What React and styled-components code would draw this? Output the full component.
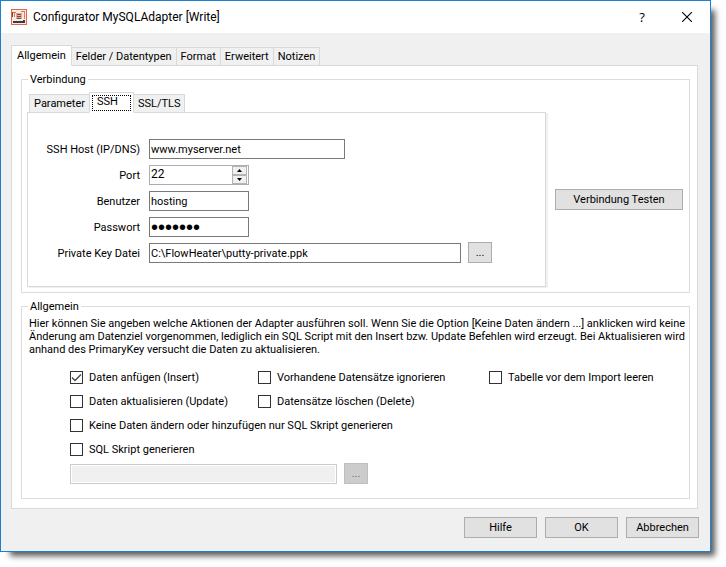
import { useState } from "react";
import styled, { createGlobalStyle } from "styled-components";

const GlobalStyle = createGlobalStyle`
  *, *::before, *::after {
    box-sizing: border-box;
  }

  body {
    margin: 0;
    background: #fff;
    color: #000;
    font-family: Roboto, "Liberation Sans", Arial, sans-serif;
    font-size: 11px;
    line-height: 13px;
  }

  button, input {
    font: inherit;
    color: inherit;
  }
`;

const Page = styled.div`
  display: flex;
  min-height: 100vh;
  padding: 0 15px 15px 0;
`;

const Window = styled.main`
  flex: 1;
  min-width: 0;
  display: flex;
  flex-direction: column;
  background: #f0f0f0;
  border: 1px solid #1a80d2;
  box-shadow: 7px 7px 6px -3px rgba(0, 0, 0, 0.65);
`;

const TitleBar = styled.header`
  display: flex;
  align-items: center;
  height: 32px;
  padding: 0 8px 0 10px;
  background: #fff;
`;

const Title = styled.h1`
  flex: 1;
  margin: 0 0 0 6px;
  font-size: 12px;
  font-weight: 400;
  line-height: 16px;
`;

const TitleButton = styled.button`
  display: flex;
  align-items: center;
  justify-content: center;
  width: 30px;
  height: 30px;
  margin-left: 15px;
  padding: 0;
  border: 0;
  background: none;
  font-family: "Open Sans", sans-serif;
  font-size: 13px;
`;

const Content = styled.div`
  flex: 1;
  padding: 12px 12px 0 10px;
`;

const TabList = styled.div`
  display: flex;
  align-items: flex-end;
  height: 20px;
  padding-left: ${(props) => (props.$inner ? "2px" : "0")};
`;

const Tab = styled.button`
  position: relative;
  height: 19px;
  margin: 0 0 -1px -1px;
  padding: 0 4px;
  border: 1px solid #d9d9d9;
  background: #f0f0f0;
  white-space: nowrap;

  &:first-child {
    margin-left: 0;
  }

  &[aria-selected="true"] {
    z-index: 1;
    height: 21px;
    padding: 0 5px 1px;
    border-bottom-color: #fff;
    background: #fff;
  }
`;

const FocusTab = styled(Tab)`
  &[aria-selected="true"] {
    padding: 0 15px 2px 7px;
  }

  &[aria-selected="true"]::after {
    content: "";
    position: absolute;
    inset: 2px 2px 1px;
    border: 1px dotted #000;
  }
`;

const TabPanel = styled.div`
  padding: 7px 7px 9px 9px;
  border: 1px solid #d9d9d9;
  background: #fff;
`;

const Group = styled.fieldset`
  min-width: 0;
  margin: 0;
  padding: 0 6px ${(props) => (props.$tall ? "14px" : "5px")} 5px;
  border: 1px solid #dcdcdc;

  & + & {
    margin-top: 7px;
  }
`;

const Legend = styled.legend`
  margin-left: 1px;
  padding: 0 2px;
`;

const Connection = styled.div`
  display: grid;
  grid-template-columns: 1fr 128px;
  column-gap: 9px;
  align-items: center;
  padding-top: 6px;
`;

const InnerPanel = styled.div`
  display: grid;
  grid-template-columns: 112px 1fr;
  grid-auto-rows: 20px;
  gap: 6px 9px;
  align-items: center;
  padding: 26px 53px 23px 0;
  border: 1px solid #d9d9d9;
  box-shadow: 2px 1px 0 #f0f0f0;
`;

const FieldLabel = styled.label`
  text-align: right;
  white-space: nowrap;
`;

const TextInput = styled.input`
  width: ${(props) => props.$width || "100%"};
  min-width: 0;
  height: 20px;
  padding: 0 1px;
  border: 1px solid #7a7a7a;
  border-radius: 0;
  background: #fff;

  &:disabled {
    border-color: #ccc;
    background: #f0f0f0;
    box-shadow: inset 0 0 0 1px #fff;
  }
`;

const PasswordInput = styled(TextInput)`
  font-family: "Liberation Sans", Arial, sans-serif;
  font-size: 20px;
`;

const Spinner = styled.div`
  display: flex;
  width: 100px;
  height: 20px;
  padding-right: 1px;
  border: 1px solid #abadb3;
`;

const SpinnerInput = styled.input`
  flex: 1;
  min-width: 0;
  padding: 0 1px 2px;
  border: 0;
  background: none;
  font-size: 12px;
`;

const SpinnerArrows = styled.div`
  display: grid;
  grid-template-rows: 1fr 1fr;
  width: 15px;
`;

const SpinnerButton = styled.button`
  display: flex;
  align-items: center;
  justify-content: center;
  min-height: 0;
  padding: 0;
  border: 1px solid #b4b4b4;
  background: #f0f0f0;
`;

const InputRow = styled.div`
  display: flex;
  align-items: flex-end;
  align-self: end;
  gap: 7px;
  padding-left: ${(props) => (props.$indent ? "43px" : "0")};
`;

const Button = styled.button`
  width: ${(props) => props.$width || "100%"};
  flex-shrink: 0;
  height: 21px;
  padding: 0;
  border: 1px solid #adadad;
  background: #e1e1e1;

  &:disabled {
    border-color: #bfbfbf;
    background: #ccc;
    color: #6d6d6d;
  }
`;

const TestButton = styled(Button)`
  margin-top: 20px;
`;

const Description = styled.p`
  margin: 4px -6px 15px 2px;
`;

const Options = styled.div`
  display: grid;
  grid-template-columns: 188px 231px 1fr;
  grid-auto-rows: 13px;
  row-gap: 11px;
  padding: 0 0 7px 43px;
`;

const Option = styled.label`
  display: flex;
  align-items: center;
  gap: 6px;
  white-space: nowrap;
  grid-column: ${(props) => (props.$wide ? "1 / -1" : "auto")};
  grid-row: ${(props) => props.$row};
`;

const CheckSlot = styled.span`
  display: grid;

  > * {
    grid-area: 1 / 1;
  }
`;

const CheckInput = styled.input`
  appearance: none;
  width: 13px;
  height: 13px;
  margin: 0;
  border: 1px solid #333;
  background: #fff;
`;

const CheckMark = styled.svg`
  pointer-events: none;
`;

const Footer = styled.footer`
  display: flex;
  justify-content: flex-end;
  gap: 8px;
  padding: 8px 11px 13px;
`;

const AppIcon = () => (
  <svg width="16" height="16" viewBox="0 0 16 16" aria-hidden="true">
    <rect x="0.5" y="0.5" width="15" height="15" fill="#fbeae3" stroke="#e4683f" />
    <path d="M2 3.5h3M10 2.5h4" stroke="#e4683f" />
    <path d="M1.5 3v5" stroke="#6b4a40" />
    <path d="M3.5 4v4M13.5 3v7" stroke="#e07a58" />
    <path d="M5 4h6v6H5z" fill="#e9a68f" />
    <path d="M6 5.5h4M6 7.5h4M6 9.5h4" stroke="#6c5049" />
    <path d="M2 12h10v-1h2v3H2z" fill="#353c42" />
  </svg>
);

const MAIN_TABS = [
  "Allgemein",
  "Felder / Datentypen",
  "Format",
  "Erweitert",
  "Notizen",
];

const INNER_TABS = ["Parameter", "SSH", "SSL/TLS"];

const OPTIONS = [
  { label: "Daten anfügen (Insert)", row: 1, checked: true },
  { label: "Vorhandene Datensätze ignorieren", row: 1 },
  { label: "Tabelle vor dem Import leeren", row: 1 },
  { label: "Daten aktualisieren (Update)", row: 2 },
  { label: "Datensätze löschen (Delete)", row: 2 },
  {
    label: "Keine Daten ändern oder hinzufügen nur SQL Skript generieren",
    row: 3,
    wide: true,
  },
  { label: "SQL Skript generieren", row: 4, wide: true },
];

const CheckOption = ({ option }) => {
  const [checked, setChecked] = useState(Boolean(option.checked));

  return (
    <Option $row={option.row} $wide={option.wide}>
      <CheckSlot>
        <CheckInput
          type="checkbox"
          checked={checked}
          onChange={(e) => setChecked(e.target.checked)}
        />
        {checked && (
          <CheckMark width="13" height="13" viewBox="0 0 13 13">
            <path
              d="M2 6.5 5 9.5 11 3.5"
              fill="none"
              stroke="#444"
              strokeWidth="1.3"
            />
          </CheckMark>
        )}
      </CheckSlot>
      {option.label}
    </Option>
  );
};

const App = () => {
  const [mainTab, setMainTab] = useState("Allgemein");
  const [innerTab, setInnerTab] = useState("SSH");
  const [port, setPort] = useState(22);

  return (
    <Page>
      <GlobalStyle />
      <Window>
        <TitleBar>
          <AppIcon />
          <Title>Configurator MySQLAdapter [Write]</Title>
          <TitleButton type="button">?</TitleButton>
          <TitleButton type="button" aria-label="Schließen">
            <svg width="10" height="10" viewBox="0 0 10 10">
              <path d="M0 0 10 10M10 0 0 10" stroke="#000" strokeWidth="1.1" />
            </svg>
          </TitleButton>
        </TitleBar>

        <Content>
          <TabList role="tablist">
            {MAIN_TABS.map((name) => (
              <Tab
                key={name}
                type="button"
                role="tab"
                aria-selected={mainTab === name}
                onClick={() => setMainTab(name)}
              >
                {name}
              </Tab>
            ))}
          </TabList>

          <TabPanel role="tabpanel">
            <Group>
              <Legend>Verbindung</Legend>
              <Connection>
                <div>
                  <TabList role="tablist" $inner>
                    {INNER_TABS.map((name) => (
                      <FocusTab
                        key={name}
                        type="button"
                        role="tab"
                        aria-selected={innerTab === name}
                        onClick={() => setInnerTab(name)}
                      >
                        {name}
                      </FocusTab>
                    ))}
                  </TabList>
                  <InnerPanel role="tabpanel">
                    <FieldLabel htmlFor="host">SSH Host (IP/DNS)</FieldLabel>
                    <TextInput
                      id="host"
                      $width="196px"
                      defaultValue="www.myserver.net"
                    />

                    <FieldLabel htmlFor="port">Port</FieldLabel>
                    <Spinner>
                      <SpinnerInput
                        id="port"
                        value={port}
                        onChange={(e) => setPort(Number(e.target.value) || 0)}
                      />
                      <SpinnerArrows>
                        <SpinnerButton
                          type="button"
                          aria-label="Port erhöhen"
                          onClick={() => setPort(port + 1)}
                        >
                          <svg width="5" height="3" viewBox="0 0 5 3">
                            <path d="M0 3 2.5 0 5 3z" />
                          </svg>
                        </SpinnerButton>
                        <SpinnerButton
                          type="button"
                          aria-label="Port verringern"
                          onClick={() => setPort(port - 1)}
                        >
                          <svg width="5" height="3" viewBox="0 0 5 3">
                            <path d="M0 0h5L2.5 3z" />
                          </svg>
                        </SpinnerButton>
                      </SpinnerArrows>
                    </Spinner>

                    <FieldLabel htmlFor="user">Benutzer</FieldLabel>
                    <TextInput id="user" $width="100px" defaultValue="hosting" />

                    <FieldLabel htmlFor="password">Passwort</FieldLabel>
                    <PasswordInput
                      id="password"
                      type="password"
                      $width="100px"
                      defaultValue="hosting"
                    />

                    <FieldLabel htmlFor="keyfile">Private Key Datei</FieldLabel>
                    <InputRow>
                      <TextInput
                        id="keyfile"
                        defaultValue="C:\FlowHeater\putty-private.ppk"
                      />
                      <Button type="button" $width="24px">
                        ...
                      </Button>
                    </InputRow>
                  </InnerPanel>
                </div>
                <TestButton type="button">Verbindung Testen</TestButton>
              </Connection>
            </Group>

            <Group $tall>
              <Legend>Allgemein</Legend>
              <Description>
                Hier können Sie angeben welche Aktionen der Adapter ausführen
                soll. Wenn Sie die Option [Keine Daten ändern ...] anklicken
                wird keine Änderung am Datenziel vorgenommen, lediglich ein SQL
                Script mit den Insert bzw. Update Befehlen wird erzeugt. Bei
                Aktualisieren wird anhand des PrimaryKey versucht die Daten zu
                aktualisieren.
              </Description>
              <Options>
                {OPTIONS.map((option) => (
                  <CheckOption key={option.label} option={option} />
                ))}
              </Options>
              <InputRow $indent>
                <TextInput $width="267px" aria-label="SQL Skript Datei" disabled />
                <Button type="button" $width="24px" disabled>
                  ...
                </Button>
              </InputRow>
            </Group>
          </TabPanel>
        </Content>

        <Footer>
          <Button type="button" $width="73px">
            Hilfe
          </Button>
          <Button type="button" $width="73px">
            OK
          </Button>
          <Button type="button" $width="73px">
            Abbrechen
          </Button>
        </Footer>
      </Window>
    </Page>
  );
};

export default App;
